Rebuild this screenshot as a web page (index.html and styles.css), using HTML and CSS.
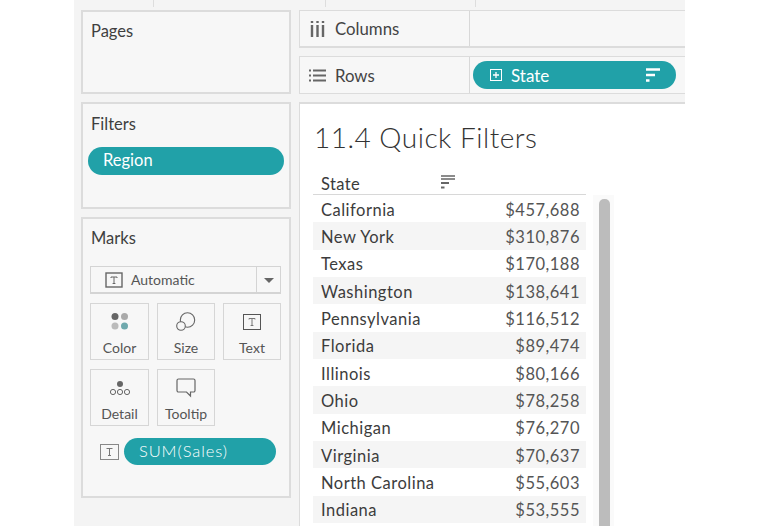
FILE: index.html
```html
<!DOCTYPE html>
<html lang="en">
<head>
    <meta charset="UTF-8">
    <title>11.4 Quick Filters</title>
    <link rel="stylesheet" href="styles.css">
</head>
<body>
    <div class="app">
        <div class="top-ticks">
            <i class="tick tick-a"></i>
            <i class="tick tick-b"></i>
            <i class="tick tick-c"></i>
        </div>
        <div class="workspace">
            <aside class="side">
                <section class="card card-pages">
                    <h3>Pages</h3>
                </section>
                <section class="card card-filters">
                    <h3>Filters</h3>
                    <div class="pill pill-region">Region</div>
                </section>
                <section class="card card-marks">
                    <h3>Marks</h3>
                    <div class="mark-select">
                        <svg class="t-icon" width="18" height="16" viewBox="0 0 18 16"><rect x="1" y="1" width="16" height="14" fill="none" stroke="#666" stroke-width="1.4"/><path d="M6 5h6M9 5v6.500M7.600 11.500h2.800M6 5v1M12 5v1" fill="none" stroke="#666"/></svg>
                        <span class="mark-label">Automatic</span>
                        <span class="mark-arrow"></span>
                    </div>
                    <div class="mark-grid">
                        <div class="mark-btn">
                            <svg width="20" height="20" viewBox="0 0 20 20"><circle cx="5" cy="4.500" r="3.500" fill="#666"/><circle cx="14.500" cy="4.500" r="3.500" fill="#aaa"/><circle cx="5" cy="14" r="3.500" fill="#bbb"/><circle cx="14.500" cy="14" r="3.500" fill="#6fa9ad"/></svg>
                            <span>Color</span>
                        </div>
                        <div class="mark-btn">
                            <svg width="20" height="20" viewBox="0 0 20 20"><circle cx="11.500" cy="8" r="7.200" fill="none" stroke="#666" stroke-width="1.100"/><circle cx="5" cy="14" r="4.300" fill="#f7f7f7" stroke="#666" stroke-width="1.100"/></svg>
                            <span>Size</span>
                        </div>
                        <div class="mark-btn">
                            <svg width="18" height="20" viewBox="0 -2 18 20"><rect x="0.500" y="0.500" width="17" height="15" fill="none" stroke="#555"/><path d="M6 4.500h6M9 4.500v7M7.600 11.500h2.800M6 4.500v1M12 4.500v1" fill="none" stroke="#777"/></svg>
                            <span>Text</span>
                        </div>
                        <div class="mark-btn">
                            <svg width="22" height="20" viewBox="0 0 22 20"><circle cx="11" cy="6" r="3" fill="#666"/><circle cx="4" cy="14" r="2.600" fill="none" stroke="#666"/><circle cx="11" cy="14" r="2.600" fill="none" stroke="#666"/><circle cx="18" cy="14" r="2.600" fill="none" stroke="#666"/></svg>
                            <span>Detail</span>
                        </div>
                        <div class="mark-btn">
                            <svg width="20" height="20" viewBox="0 0 20 20"><path d="M2.500 1h15a1.500 1.500 0 0 1 1.500 1.500v10a1.500 1.500 0 0 1-1.500 1.500h-3v4l-4-4h-8A1.500 1.500 0 0 1 1 12.500v-10A1.500 1.500 0 0 1 2.500 1z" fill="none" stroke="#666" stroke-width="1.200"/></svg>
                            <span>Tooltip</span>
                        </div>
                    </div>
                    <div class="mark-field">
                        <svg width="19" height="16" viewBox="0 0 19 16"><rect x="0.500" y="0.500" width="18" height="15" fill="#f7f7f7" stroke="#888"/><path d="M6.500 4.500h6M9.500 4.500v7M8 11.500h3" fill="none" stroke="#777"/></svg>
                        <div class="pill pill-sum">SUM(Sales)</div>
                    </div>
                </section>
            </aside>
            <main class="main">
                <div class="shelf shelf-columns">
                    <div class="shelf-head">
                        <svg width="15" height="16" viewBox="0 0 15 16"><path d="M2 0v2M7.500 0v2M13 0v2" stroke="#666" stroke-width="2.400"/><path d="M2 4v12M7.500 4v12M13 4v12" stroke="#666" stroke-width="2.400"/></svg>
                        <span>Columns</span>
                    </div>
                    <div class="shelf-body"></div>
                </div>
                <div class="shelf shelf-rows">
                    <div class="shelf-head">
                        <svg width="17" height="13" viewBox="0 0 17 13"><path d="M0 1.500h2M4 1.500h13M0 6.500h2M4 6.500h13M0 11.500h2M4 11.500h13" stroke="#666" stroke-width="2"/></svg>
                        <span>Rows</span>
                    </div>
                    <div class="shelf-body">
                        <div class="pill pill-state">
                            <svg class="plus" width="12" height="12" viewBox="0 0 12 12"><rect x="0.500" y="0.500" width="11" height="11" fill="none" stroke="#fff"/><path d="M3 6h6M6 3v6" stroke="#fff" stroke-width="1.300"/></svg>
                            <span class="state-label">State</span>
                            <svg class="sort" width="14" height="14" viewBox="0 0 14 14"><path d="M0 1.500h14M0 7h9M0 12.500h3.500" stroke="#fff" stroke-width="2.400"/></svg>
                        </div>
                    </div>
                </div>
                <div class="view">
                    <h1>11.4 Quick Filters</h1>
                    <div class="table-wrap">
                        <div class="table">
                            <div class="table-head">
                                <span class="head-state">State</span>
                                <svg width="14" height="14" viewBox="0 0 14 14"><path d="M0 1h14M0 4h14" stroke="#666" stroke-width="1.500"/><path d="M0 8h8" stroke="#666" stroke-width="2"/><path d="M0 12.500h3.500" stroke="#666" stroke-width="2"/></svg>
                            </div>
                            <div class="row"><span>California</span><span class="val">$457,688</span></div>
                            <div class="row"><span>New York</span><span class="val">$310,876</span></div>
                            <div class="row"><span>Texas</span><span class="val">$170,188</span></div>
                            <div class="row"><span>Washington</span><span class="val">$138,641</span></div>
                            <div class="row"><span>Pennsylvania</span><span class="val">$116,512</span></div>
                            <div class="row"><span>Florida</span><span class="val">$89,474</span></div>
                            <div class="row"><span>Illinois</span><span class="val">$80,166</span></div>
                            <div class="row"><span>Ohio</span><span class="val">$78,258</span></div>
                            <div class="row"><span>Michigan</span><span class="val">$76,270</span></div>
                            <div class="row"><span>Virginia</span><span class="val">$70,637</span></div>
                            <div class="row"><span>North Carolina</span><span class="val">$55,603</span></div>
                            <div class="row"><span>Indiana</span><span class="val">$53,555</span></div>
                        </div>
                        <div class="scroll"><div class="thumb"></div></div>
                    </div>
                </div>
            </main>
        </div>
    </div>
</body>
</html>
```

FILE: styles.css
```css
html, body {
    margin: 0;
    padding: 0;
    background-color: #fff;
}
body {
    font-family: "Lato", "Open Sans", sans-serif;
    color: #3a3a3a;
    height: 526px;
    overflow: hidden;
}
h1, h3 {
    margin: 0;
    font-weight: 400;
}
svg {
    display: block;
    flex: none;
}
.app {
    width: 611px;
    height: 526px;
    margin-left: 74px;
    background-color: #f4f4f4;
    overflow: hidden;
}
.top-ticks {
    display: flex;
    height: 7px;
    margin-bottom: 3px;
}
.tick {
    width: 1px;
    background-color: #ddd;
}
.tick-a { margin-left: 79px; }
.tick-b { margin-left: 171px; }
.tick-c { margin-left: 149px; }
.workspace {
    display: flex;
    gap: 8px;
    padding-left: 7px;
}
.side {
    width: 210px;
    flex: none;
    display: flex;
    flex-direction: column;
    gap: 8px;
}
.card {
    box-sizing: border-box;
    border: 2px solid #dcdcdc;
    padding: 10px 8px 0;
    background-color: #f7f7f7;
}
.card h3 {
    font-size: 16.500px;
    line-height: 20px;
    color: #3f3f3f;
}
.card-pages { height: 84px; padding-top: 9px; }
.card-filters { height: 107px; }
.card-marks { height: 281px; padding: 9px 8px 0 7px; }
.card-marks h3 { margin-left: 1px; }
.pill {
    background-color: #21a1a8;
    color: #fff;
    border-radius: 14px;
    box-sizing: border-box;
    font-size: 16.500px;
}
.pill-region {
    height: 28px;
    line-height: 27px;
    margin: 13px -3px 0 -3px;
    padding-left: 15px;
}
.mark-select {
    display: flex;
    align-items: center;
    height: 28px;
    margin-top: 18px;
    border: 1px solid #d4d4d4;
    border-bottom-width: 2px;
    box-sizing: border-box;
}
.t-icon { margin-left: 14px; }
.mark-label {
    flex: 1;
    margin-left: 8px;
    font-size: 14px;
    color: #555;
}
.mark-arrow {
    width: 24px;
    height: 100%;
    box-sizing: border-box;
    border-left: 1px solid #d4d4d4;
    position: relative;
}
.mark-arrow::after {
    content: "";
    position: absolute;
    left: 7px;
    top: 11px;
    border-left: 5px solid transparent;
    border-right: 5px solid transparent;
    border-top: 5px solid #666;
}
.mark-grid {
    display: grid;
    grid-template-columns: 59px 58px 58px;
    grid-auto-rows: 57px;
    column-gap: 8px;
    row-gap: 9px;
    margin-top: 9px;
}
.mark-btn {
    box-sizing: border-box;
    border: 1px solid #d6d6d6;
    display: flex;
    flex-direction: column;
    align-items: center;
    padding-top: 8px;
    font-size: 14px;
    color: #555;
}
.mark-btn span {
    margin-top: 7px;
    line-height: 18px;
}
.mark-field {
    display: flex;
    align-items: center;
    gap: 5px;
    margin-top: 12px;
    padding-left: 10px;
}
.pill-sum {
    width: 152px;
    height: 27px;
    line-height: 26px;
    padding-left: 15px;
    letter-spacing: 0.900px;
    font-weight: 300;
}
.main {
    flex: 1;
    min-width: 0;
}
.shelf {
    display: flex;
    height: 38px;
    box-sizing: border-box;
    border-top: 1px solid #dcdcdc;
    border-bottom: 2px solid #dcdcdc;
    border-left: 1px solid #dcdcdc;
    margin-bottom: 8px;
    background-color: #f7f7f7;
}
.shelf-rows { border-bottom-width: 1px; }
.shelf-head {
    width: 170px;
    flex: none;
    box-sizing: border-box;
    border-right: 1px solid #d8d8d8;
    display: flex;
    align-items: center;
    gap: 10px;
    padding-left: 10px;
    font-size: 16.800px;
    color: #444;
}
.shelf-rows .shelf-head { padding-left: 9px; gap: 9px; }
.shelf-body {
    flex: 1;
    padding: 4px 9px 0 3px;
}
.pill-state {
    display: flex;
    align-items: center;
    height: 28px;
    padding: 0 16px 0 17px;
}
.state-label {
    flex: 1;
    margin-left: 9px;
    font-size: 17px;
}
.view {
    background-color: #fff;
    height: 430px;
    border-top: 2px solid #dcdcdc;
    border-left: 1px solid #dcdcdc;
    padding: 15px 0 0 13px;
}
.view h1 {
    margin-left: 1px;
    font-size: 28px;
    line-height: 36px;
    letter-spacing: 0.500px;
    color: #333;
    font-weight: 300;
}
.table-wrap {
    display: flex;
    margin-top: 16px;
}
.table {
    width: 273px;
    flex: none;
}
.table-head {
    display: flex;
    align-items: flex-start;
    height: 23px;
    border-bottom: 1px solid #d8d8d8;
    padding-left: 8px;
    font-size: 16.500px;
    letter-spacing: 0.400px;
    line-height: 26px;
}
.head-state { width: 120px; }
.table-head svg { margin-top: 4px; }
.row {
    display: flex;
    justify-content: space-between;
    align-items: center;
    box-sizing: border-box;
    height: 27.330px;
    padding: 2px 6px 0 8px;
    font-size: 16.500px;
    letter-spacing: 0.500px;
    color: #3c3c3c;
}
.row:nth-child(odd) {
    background-color: #f5f5f5;
}
.val {
    color: #555;
}
.scroll {
    width: 21px;
    margin-left: 7px;
    margin-top: 24px;
    background-color: #fafafa;
    padding: 4px 4px 0 6px;
    box-sizing: border-box;
    height: 340px;
}
.thumb {
    height: 100%;
    background-color: #bcbcbc;
    border-radius: 5px 5px 0 0;
}
```
